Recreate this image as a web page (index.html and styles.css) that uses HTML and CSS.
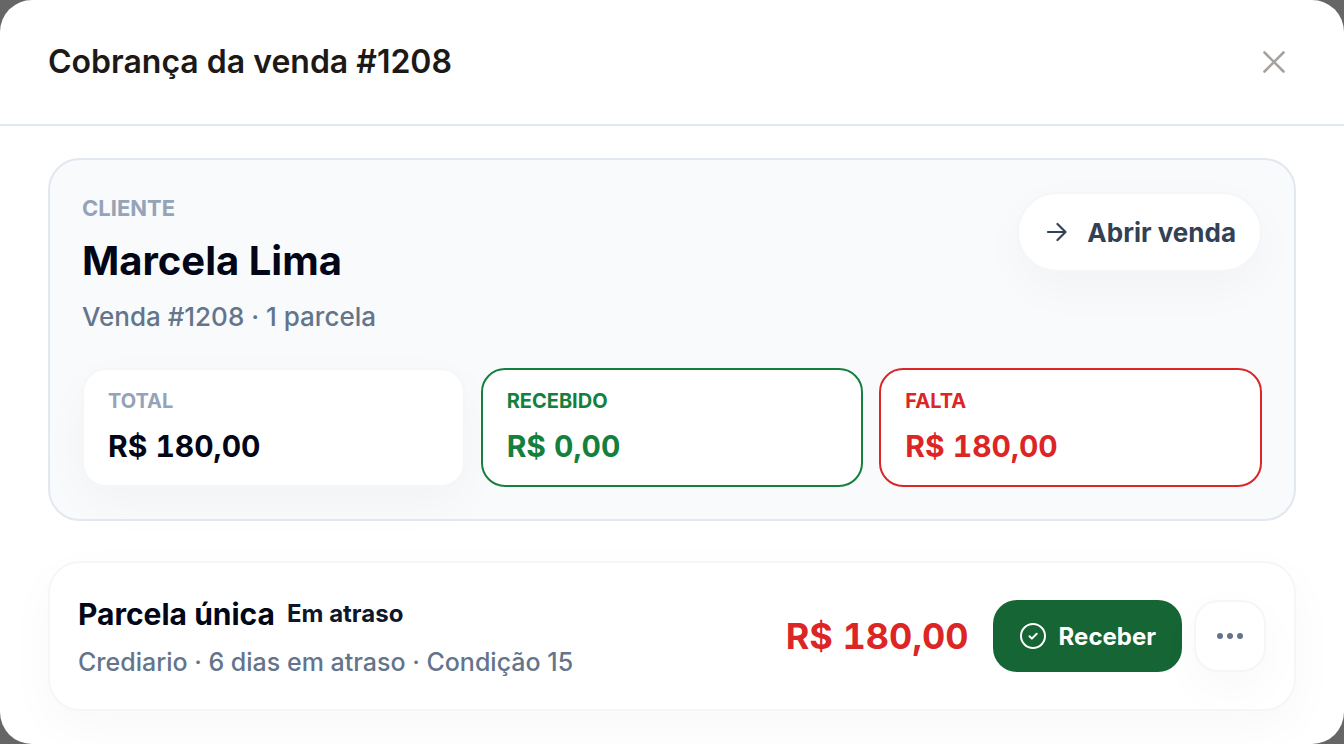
FILE: index.html
```html
<!DOCTYPE html>
<html lang="pt-BR">
<head>
<meta charset="utf-8">
<meta name="viewport" content="width=device-width, initial-scale=1">
<title>Cobrança da venda #1208</title>
<link rel="stylesheet" href="styles.css">
</head>
<body>
<main class="modal" role="dialog" aria-labelledby="modal-title">
  <header class="modal-header">
    <h1 class="modal-title" id="modal-title">Cobrança da venda #1208</h1>
    <button class="close" type="button" aria-label="Fechar">
      <svg width="24" height="24" viewBox="0 0 24 24" fill="none" stroke="currentColor" stroke-width="2.6" stroke-linecap="round"><path d="M2.500 2.500l19 19M21.500 2.500l-19 19"/></svg>
    </button>
  </header>
  <div class="modal-body">
    <section class="summary">
      <div class="summary-top">
        <div class="client">
          <p class="eyebrow">CLIENTE</p>
          <h2 class="client-name">Marcela Lima</h2>
          <p class="detail">Venda #1208 · 1 parcela</p>
        </div>
        <button class="open-sale" type="button">
          <svg width="22" height="22" viewBox="0 0 22 22" fill="none" stroke="currentColor" stroke-width="2.2" stroke-linecap="round" stroke-linejoin="round"><path d="M3 11h17.500M12.500 3l8 8-8 8"/></svg>
          <span>Abrir venda</span>
        </button>
      </div>
      <dl class="stats">
        <div class="stat">
          <dt class="stat-label">TOTAL</dt>
          <dd class="stat-value">R$ 180,00</dd>
        </div>
        <div class="stat stat-received">
          <dt class="stat-label">RECEBIDO</dt>
          <dd class="stat-value">R$ 0,00</dd>
        </div>
        <div class="stat stat-missing">
          <dt class="stat-label">FALTA</dt>
          <dd class="stat-value">R$ 180,00</dd>
        </div>
      </dl>
    </section>
    <section class="installment">
      <div class="installment-info">
        <div class="installment-heading">
          <h3 class="installment-title">Parcela única</h3>
          <span class="status">Em atraso</span>
        </div>
        <p class="installment-detail">Crediario · 6 dias em atraso · Condição 15</p>
      </div>
      <strong class="amount">R$ 180,00</strong>
      <div class="actions">
        <button class="receive" type="button">
          <svg width="28" height="28" viewBox="0 0 28 28" fill="none" stroke="currentColor" stroke-width="2" stroke-linecap="round" stroke-linejoin="round"><circle cx="14" cy="14" r="12"/><path d="M10.500 14.200l2.400 2.400 4.800-4.800"/></svg>
          <span>Receber</span>
        </button>
        <button class="more" type="button" aria-label="Mais opções">
          <svg width="28" height="28" viewBox="0 0 28 28" fill="currentColor"><circle cx="4" cy="14" r="3"/><circle cx="14" cy="14" r="3"/><circle cx="24" cy="14" r="3"/></svg>
        </button>
      </div>
    </section>
  </div>
</main>
</body>
</html>
```
FILE: styles.css
```css
* {
  box-sizing: border-box;
}

body {
  margin: 0;
  background: #666;
  font-family: Inter, "Liberation Sans", sans-serif;
  color: #020617;
}

h1, h2, h3, p, dl, dd {
  margin: 0;
}

button {
  font: inherit;
  cursor: pointer;
}

svg {
  flex: none;
}

.modal {
  min-height: 100vh;
  background: #fff;
  border-radius: 32px;
  overflow: hidden;
}

.modal-header {
  display: flex;
  align-items: center;
  justify-content: space-between;
  padding: 40px 48px;
  border-bottom: 2px solid #e2e8f0;
}

.modal-title {
  font-size: 32px;
  line-height: 44px;
  font-weight: 600;
  color: #1c1917;
}

.close {
  display: grid;
  place-items: center;
  width: 44px;
  height: 44px;
  padding: 0;
  border: 0;
  background: none;
  color: #a8a29e;
}

.modal-body {
  display: flex;
  flex-direction: column;
  gap: 40px;
  padding: 32px 48px;
}

.summary {
  display: flex;
  flex-direction: column;
  gap: 32px;
  padding: 32px;
  border: 2px solid #e2e8f0;
  border-radius: 32px;
  background: #f8fafc;
}

.summary-top {
  display: flex;
  align-items: flex-start;
  justify-content: space-between;
}

.eyebrow {
  font-size: 22px;
  line-height: 32px;
  font-weight: 700;
  color: #94a3b8;
}

.client-name {
  margin-top: 8px;
  font-size: 40px;
  line-height: 58px;
  font-weight: 700;
}

.detail {
  margin-top: 8px;
  font-size: 26px;
  line-height: 38px;
  font-weight: 500;
  color: #64748b;
}

.open-sale {
  display: flex;
  align-items: center;
  gap: 20px;
  height: 80px;
  padding: 0 24px 0 26px;
  border: 2px solid #f4f6f9;
  border-radius: 40px;
  background: #fff;
  color: #334155;
  font-size: 26px;
  font-weight: 700;
  box-shadow: 0 16px 48px rgba(15, 23, 42, 0.03);
}

.stats {
  display: grid;
  grid-template-columns: repeat(3, 1fr);
  gap: 16px;
}

.stat {
  padding: 16px 24px;
  border: 2px solid #f4f6f9;
  border-radius: 24px;
  background: #fff;
  box-shadow: 0 16px 48px rgba(15, 23, 42, 0.03);
}

.stat-label {
  font-size: 20px;
  line-height: 30px;
  font-weight: 700;
  color: #94a3b8;
}

.stat-value {
  margin-top: 8px;
  font-size: 30px;
  line-height: 45px;
  font-weight: 700;
  font-variant-numeric: tabular-nums;
}

.stat-received {
  border-color: #15803d;
  box-shadow: none;
}

.stat-missing {
  border-color: #dc2626;
  box-shadow: none;
}

.stat-received > * {
  color: #15803d;
}

.stat-missing > * {
  color: #dc2626;
}

.installment {
  display: flex;
  align-items: center;
  gap: 24px;
  padding: 28px;
  border: 2px solid #f4f6f9;
  border-radius: 32px;
  background: #fff;
  box-shadow: 0 16px 48px rgba(15, 23, 42, 0.03);
}

.installment-info {
  flex: 1;
}

.installment-heading {
  display: flex;
  align-items: center;
  gap: 12px;
}

.installment-title {
  font-size: 30px;
  line-height: 46px;
  font-weight: 700;
}

.status {
  font-size: 24px;
  line-height: 46px;
  font-weight: 700;
  color: #0f172a;
}

.installment-detail {
  margin-top: 6px;
  font-size: 25px;
  line-height: 38px;
  font-weight: 500;
  color: #64748b;
}

.amount {
  font-size: 36px;
  line-height: 54px;
  font-weight: 700;
  font-variant-numeric: tabular-nums;
  color: #dc2626;
}

.actions {
  display: flex;
  gap: 12px;
}

.receive {
  display: flex;
  align-items: center;
  gap: 12px;
  height: 72px;
  padding: 0 26px;
  border: 0;
  border-radius: 24px;
  background: #166534;
  color: #fff;
  font-size: 24px;
  font-weight: 700;
}

.more {
  display: grid;
  place-items: center;
  width: 72px;
  height: 72px;
  padding: 0;
  border: 2px solid #f4f6f9;
  border-radius: 24px;
  background: #fff;
  color: #64748b;
  box-shadow: 0 16px 48px rgba(15, 23, 42, 0.03);
}
```
